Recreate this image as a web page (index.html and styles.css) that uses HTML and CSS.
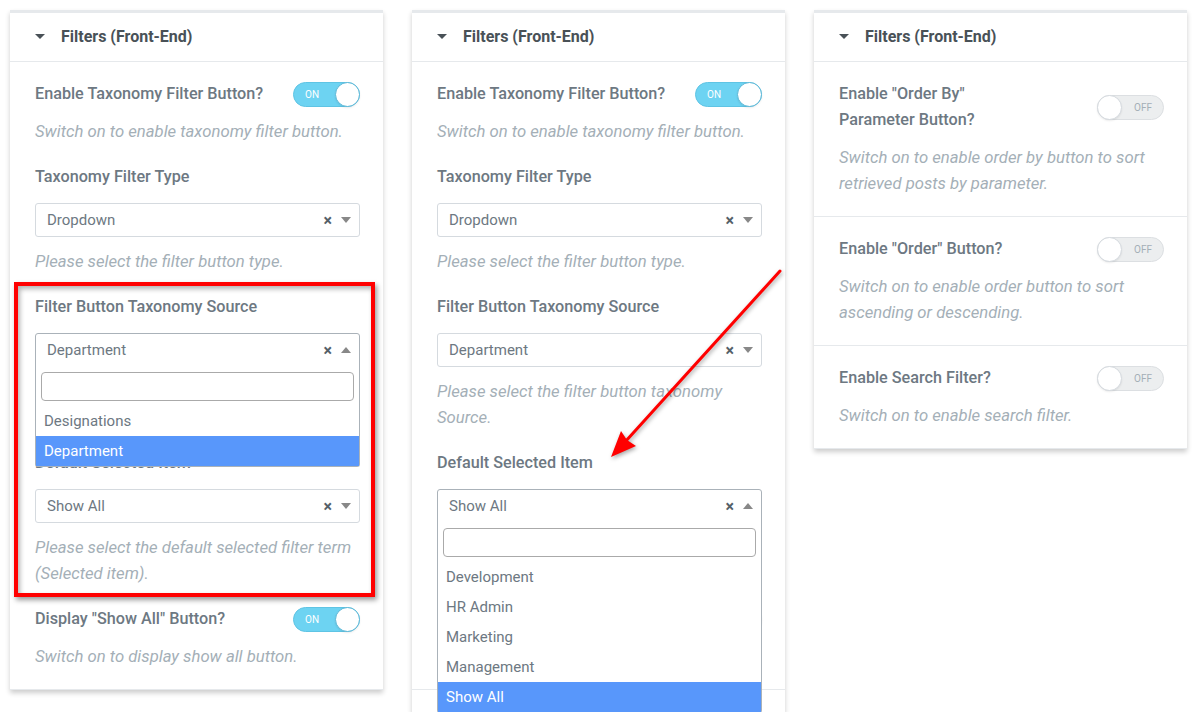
FILE: index.html
```html
<!DOCTYPE html>
<html lang="en">
<head>
    <meta charset="UTF-8">
    <meta name="viewport" content="width=device-width, initial-scale=1.0">
    <title>Filters (Front-End)</title>
    <link rel="stylesheet" href="styles.css">
</head>
<body>
    <div class="page">

        <!-- Panel 1: taxonomy source open -->
        <div class="panel">
            <div class="panel-head"><span class="caret"></span>Filters (Front-End)</div>
            <div class="section">
                <div class="control">
                    <div class="row">
                        <div class="label">Enable Taxonomy Filter Button?</div>
                        <span class="toggle on"><span class="toggle-text">ON</span><span class="knob"></span></span>
                    </div>
                    <p class="desc">Switch on to enable taxonomy filter button.</p>
                </div>
                <div class="control">
                    <div class="label">Taxonomy Filter Type</div>
                    <div class="select"><span class="value">Dropdown</span><span class="clear">×</span><span class="arrow"></span></div>
                    <p class="desc">Please select the filter button type.</p>
                </div>
                <div class="control">
                    <div class="label">Filter Button Taxonomy Source</div>
                    <div class="select open">
                        <span class="value">Department</span><span class="clear">×</span><span class="arrow"></span>
                        <div class="dropdown">
                            <div class="search"></div>
                            <div class="option">Designations</div>
                            <div class="option active">Department</div>
                        </div>
                    </div>
                    <p class="desc">Please select the filter button taxonomy Source.</p>
                </div>
                <div class="control">
                    <div class="label">Default Selected Item</div>
                    <div class="select"><span class="value">Show All</span><span class="clear">×</span><span class="arrow"></span></div>
                    <p class="desc">Please select the default selected filter term (Selected item).</p>
                </div>
                <div class="control">
                    <div class="row">
                        <div class="label">Display "Show All" Button?</div>
                        <span class="toggle on"><span class="toggle-text">ON</span><span class="knob"></span></span>
                    </div>
                    <p class="desc">Switch on to display show all button.</p>
                </div>
            </div>
        </div>

        <!-- Panel 2: default item open -->
        <div class="panel">
            <div class="panel-head"><span class="caret"></span>Filters (Front-End)</div>
            <div class="section">
                <div class="control">
                    <div class="row">
                        <div class="label">Enable Taxonomy Filter Button?</div>
                        <span class="toggle on"><span class="toggle-text">ON</span><span class="knob"></span></span>
                    </div>
                    <p class="desc">Switch on to enable taxonomy filter button.</p>
                </div>
                <div class="control">
                    <div class="label">Taxonomy Filter Type</div>
                    <div class="select"><span class="value">Dropdown</span><span class="clear">×</span><span class="arrow"></span></div>
                    <p class="desc">Please select the filter button type.</p>
                </div>
                <div class="control">
                    <div class="label">Filter Button Taxonomy Source</div>
                    <div class="select"><span class="value">Department</span><span class="clear">×</span><span class="arrow"></span></div>
                    <p class="desc">Please select the filter button taxonomy<br>Source.</p>
                </div>
                <div class="control">
                    <div class="label">Default Selected Item</div>
                    <div class="select open">
                        <span class="value">Show All</span><span class="clear">×</span><span class="arrow"></span>
                        <div class="dropdown">
                            <div class="search"></div>
                            <div class="option">Development</div>
                            <div class="option">HR Admin</div>
                            <div class="option">Marketing</div>
                            <div class="option">Management</div>
                            <div class="option active">Show All</div>
                        </div>
                    </div>
                    <p class="desc">Please select the default selected filter term (Selected item).</p>
                </div>
                <div class="control">
                    <div class="row">
                        <div class="label">Display "Show All" Button?</div>
                        <span class="toggle on"><span class="toggle-text">ON</span><span class="knob"></span></span>
                    </div>
                    <p class="desc">Switch on to display show all button.</p>
                </div>
            </div>
            <div class="panel-foot"></div>
        </div>

        <!-- Panel 3: order / search switches -->
        <div class="panel">
            <div class="panel-head"><span class="caret"></span>Filters (Front-End)</div>
            <div class="section">
                <div class="row">
                    <div class="label">Enable "Order By"<br>Parameter Button?</div>
                    <span class="toggle"><span class="knob"></span><span class="toggle-text">OFF</span></span>
                </div>
                <p class="desc">Switch on to enable order by button to sort retrieved posts by parameter.</p>
            </div>
            <div class="section">
                <div class="row">
                    <div class="label">Enable "Order" Button?</div>
                    <span class="toggle"><span class="knob"></span><span class="toggle-text">OFF</span></span>
                </div>
                <p class="desc">Switch on to enable order button to sort ascending or descending.</p>
            </div>
            <div class="section">
                <div class="row">
                    <div class="label">Enable Search Filter?</div>
                    <span class="toggle"><span class="knob"></span><span class="toggle-text">OFF</span></span>
                </div>
                <p class="desc">Switch on to enable search filter.</p>
            </div>
        </div>

        <!-- annotations -->
        <div class="mark-box"></div>
        <svg class="mark-arrow" width="200" height="210" viewBox="600 260 200 210">
            <line x1="780" y1="271" x2="625" y2="442" stroke="#f00" stroke-width="3" stroke-linecap="round"/>
            <polygon points="611,457 621,431 627,440 636,446" fill="#f00"/>
        </svg>
    </div>
</body>
</html>
```

FILE: styles.css
```css
body {
    margin: 0;
    background: #fff;
    font-family: Roboto, "Liberation Sans", sans-serif;
    color: #6d7882;
}
.page {
    position: relative;
    display: flex;
    align-items: flex-start;
    gap: 29px;
    padding: 10px 0 0 10px;
}
.panel {
    width: 373px;
    background: #fff;
    border-top: 3px solid #e6e9ec;
    box-shadow: 0 3px 5px rgba(0,0,0,0.2);
}
.panel-head {
    display: flex;
    align-items: center;
    box-sizing: border-box;
    height: 49px;
    padding: 0 0 2px 25px;
    border-bottom: 1px solid #e6e9ec;
    font-size: 16px;
    font-weight: 700;
    color: #495157;
}
.caret {
    width: 0;
    height: 0;
    border-left: 5px solid transparent;
    border-right: 5px solid transparent;
    border-top: 5px solid #495157;
    margin-right: 16px;
}
.section {
    padding: 19px 23px 19px 25px;
    border-bottom: 1px solid #e6e9ec;
}
.panel-foot {
    height: 22px;
}
.control + .control {
    margin-top: 19px;
}
.row {
    display: flex;
    align-items: center;
    justify-content: space-between;
}
.label {
    font-size: 16.2px;
    font-weight: 500;
    line-height: 26px;
    color: #6d7882;
}
.desc {
    margin: 12px 0 0;
    font-size: 16.7px;
    font-style: italic;
    line-height: 26px;
    color: #a4afb7;
}

/* switcher */
.toggle {
    display: flex;
    align-items: center;
    box-sizing: border-box;
    width: 67px;
    height: 25px;
    border-radius: 13px;
    font-size: 10px;
    text-transform: uppercase;
}
.toggle.on {
    background: #6dd3f2;
    border: 1px solid #5fc4e4;
    color: #fff;
    justify-content: space-between;
    padding-left: 11px;
}
.toggle:not(.on) {
    background: #eceeef;
    border: 1px solid #dcdfe2;
    color: #a4afb7;
}
.toggle:not(.on) .toggle-text {
    margin-left: 13px;
}
.knob {
    box-sizing: border-box;
    width: 25px;
    height: 25px;
    margin: -1px;
    border-radius: 50%;
    background: #fff;
    border: 1px solid #d5dadf;
    box-shadow: 0 1px 2px rgba(0,0,0,0.08);
}
.toggle.on .knob {
    border-color: #5bb8d8;
}

/* select2 look */
.select {
    position: relative;
    display: flex;
    align-items: center;
    height: 34px;
    box-sizing: border-box;
    margin-top: 13px;
    padding: 0 8px 0 11px;
    border: 1px solid #d5dadf;
    border-radius: 3px;
    font-size: 15px;
    color: #6d7882;
}
.select .value {
    flex: 1;
}
.clear {
    font-size: 16px;
    font-weight: 700;
    color: #556068;
    margin-right: 9px;
}
.arrow {
    width: 0;
    height: 0;
    border-left: 5px solid transparent;
    border-right: 5px solid transparent;
    border-top: 6px solid #888;
}
.select.open {
    border-color: #aab2b9;
    border-radius: 3px 3px 0 0;
}
.select.open .arrow {
    border-top: 0;
    border-bottom: 6px solid #888;
}
.dropdown {
    position: absolute;
    z-index: 2;
    top: 100%;
    left: -1px;
    right: -1px;
    background: #fff;
    border: 1px solid #aab2b9;
    border-top: 0;
    border-radius: 0 0 3px 3px;
}
.search {
    height: 29px;
    box-sizing: border-box;
    margin: 6px 5px 5px;
    border: 1px solid #aaa;
    border-radius: 4px;
}
.option {
    height: 30px;
    line-height: 30px;
    padding-left: 8px;
    font-size: 15px;
    color: #6d7882;
}
.option.active {
    background: #5897fb;
    color: #fff;
}

/* annotations drawn over the screenshot */
.mark-box {
    position: absolute;
    left: 14px;
    top: 282px;
    width: 361px;
    height: 315px;
    box-sizing: border-box;
    border: 4px solid #f00;
    box-shadow: 2px 3px 5px rgba(0,0,0,0.4), inset 2px 3px 5px rgba(0,0,0,0.3);
    z-index: 3;
}
.mark-arrow {
    position: absolute;
    left: 600px;
    top: 260px;
    z-index: 3;
    filter: drop-shadow(1px 2px 2px rgba(0,0,0,0.35));
}
```
